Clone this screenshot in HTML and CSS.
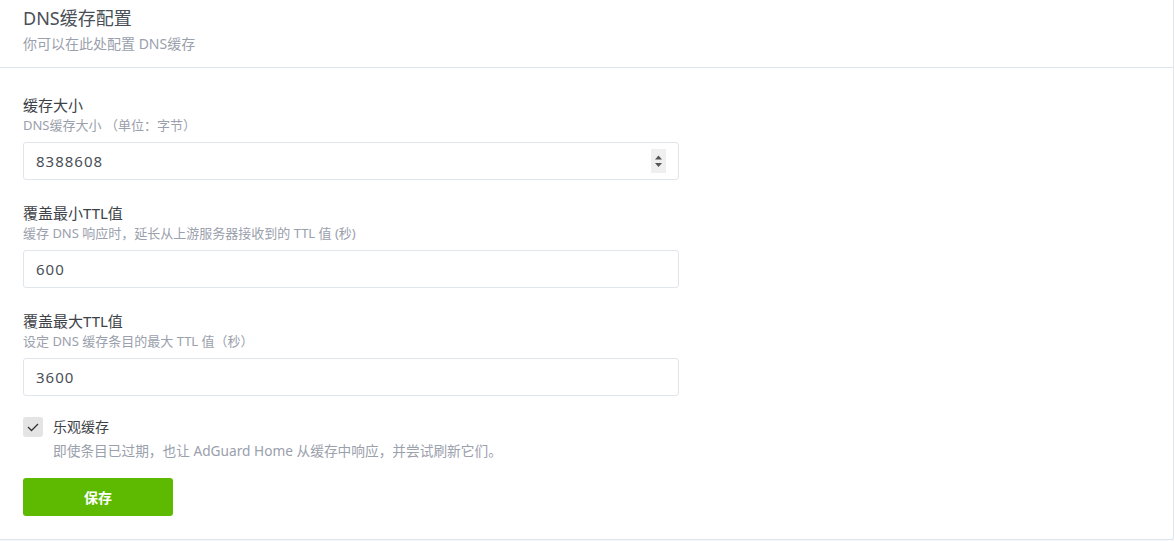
FILE: index.html
```html
<!DOCTYPE html>
<html lang="zh-CN">
<head>
    <meta charset="UTF-8">
    <meta name="viewport" content="width=device-width, initial-scale=1.0">
    <title>DNS缓存配置</title>
    <link rel="stylesheet" href="styles.css">
</head>
<body>
    <div class="card">
        <div class="card-header">
            <h3 class="card-title">DNS缓存配置</h3>
            <div class="card-subtitle">你可以在此处配置 DNS缓存</div>
        </div>

        <form class="card-body">
            <div class="form-group">
                <label class="form-label">缓存大小</label>
                <div class="form-desc">DNS缓存大小 （单位：字节）</div>
                <div class="form-control">
                    <input class="form-input" type="text" value="8388608">
                    <span class="spinner">
                        <svg width="15" height="24" viewBox="0 0 15 24">
                            <path d="M4 10.5 L11 10.5 L7.5 6.5 Z" fill="#555"/>
                            <path d="M4 14 L11 14 L7.5 18 Z" fill="#555"/>
                        </svg>
                    </span>
                </div>
            </div>

            <div class="form-group">
                <label class="form-label">覆盖最小TTL值</label>
                <div class="form-desc">缓存 DNS 响应时，延长从上游服务器接收到的 TTL 值 (秒)</div>
                <div class="form-control">
                    <input class="form-input" type="text" value="600">
                </div>
            </div>

            <div class="form-group">
                <label class="form-label">覆盖最大TTL值</label>
                <div class="form-desc">设定 DNS 缓存条目的最大 TTL 值（秒）</div>
                <div class="form-control">
                    <input class="form-input" type="text" value="3600">
                </div>
            </div>

            <div class="checkbox-row">
                <span class="checkbox">
                    <svg width="20" height="20" viewBox="0 0 20 20">
                        <path d="M5 10 L8.5 13.5 L15 7" fill="none" stroke="#333" stroke-width="1.3"/>
                    </svg>
                </span>
                <div>
                    <div class="checkbox-label">乐观缓存</div>
                    <div class="checkbox-desc">即使条目已过期，也让 AdGuard Home 从缓存中响应，并尝试刷新它们。</div>
                </div>
            </div>

            <button class="btn-save" type="button">保存</button>
        </form>
    </div>
</body>
</html>
```

FILE: styles.css
```css
body {
    margin: 0;
    height: 541px;
    background-color: #f5f7fb;
    font-family: "Noto Sans", "Noto Sans CJK SC", sans-serif;
    color: #495057;
}

.card {
    background-color: #fff;
    border-right: 1px solid #e0e5ec;
    border-bottom: 1px solid #e0e5ec;
    border-bottom-right-radius: 3px;
    height: 540px;
    box-sizing: border-box;
}

.card-header {
    padding: 5px 23px 13px;
    border-bottom: 1px solid #e0e5ec;
}

.card-title {
    margin: 0;
    font-size: 18px;
    line-height: 26px;
    font-weight: 400;
    color: #495057;
}

.card-subtitle {
    margin-top: 3px;
    font-size: 14px;
    line-height: 20px;
    color: #9aa0ac;
}

.card-body {
    padding: 27px 23px 0;
}

.form-group {
    margin-bottom: 23px;
}

.form-label {
    display: block;
    font-size: 15px;
    line-height: 20px;
    font-weight: 400;
    color: #3d4248;
}

.form-desc {
    font-size: 13px;
    line-height: 20px;
    color: #9aa0ac;
}

.form-control {
    display: flex;
    align-items: center;
    width: 656px;
    height: 38px;
    margin-top: 7px;
    box-sizing: border-box;
    border: 1px solid #e0e5ec;
    border-radius: 3px;
    padding: 0 12px;
    background-color: #fff;
}

.form-input {
    flex: 1;
    border: none;
    outline: none;
    padding: 0;
    font-family: inherit;
    font-size: 15px;
    letter-spacing: 1px;
    color: #495057;
    background: transparent;
}

.spinner {
    display: flex;
    width: 15px;
    height: 24px;
    background-color: #efefef;
}

.checkbox-row {
    display: flex;
    gap: 10px;
    margin-top: -2px;
}

.checkbox {
    display: flex;
    width: 20px;
    height: 20px;
    border-radius: 3px;
    background-color: #e4e4e4;
}

.checkbox-label {
    font-size: 14px;
    line-height: 20px;
    color: #3d4248;
}

.checkbox-desc {
    margin-top: 4px;
    font-size: 13.7px;
    line-height: 20px;
    color: #9aa0ac;
}

.btn-save {
    display: block;
    width: 150px;
    height: 38px;
    margin-top: 17px;
    border: none;
    border-radius: 3px;
    background-color: #5eba00;
    color: #fff;
    font-family: inherit;
    font-size: 14px;
    font-weight: 700;
}
```
